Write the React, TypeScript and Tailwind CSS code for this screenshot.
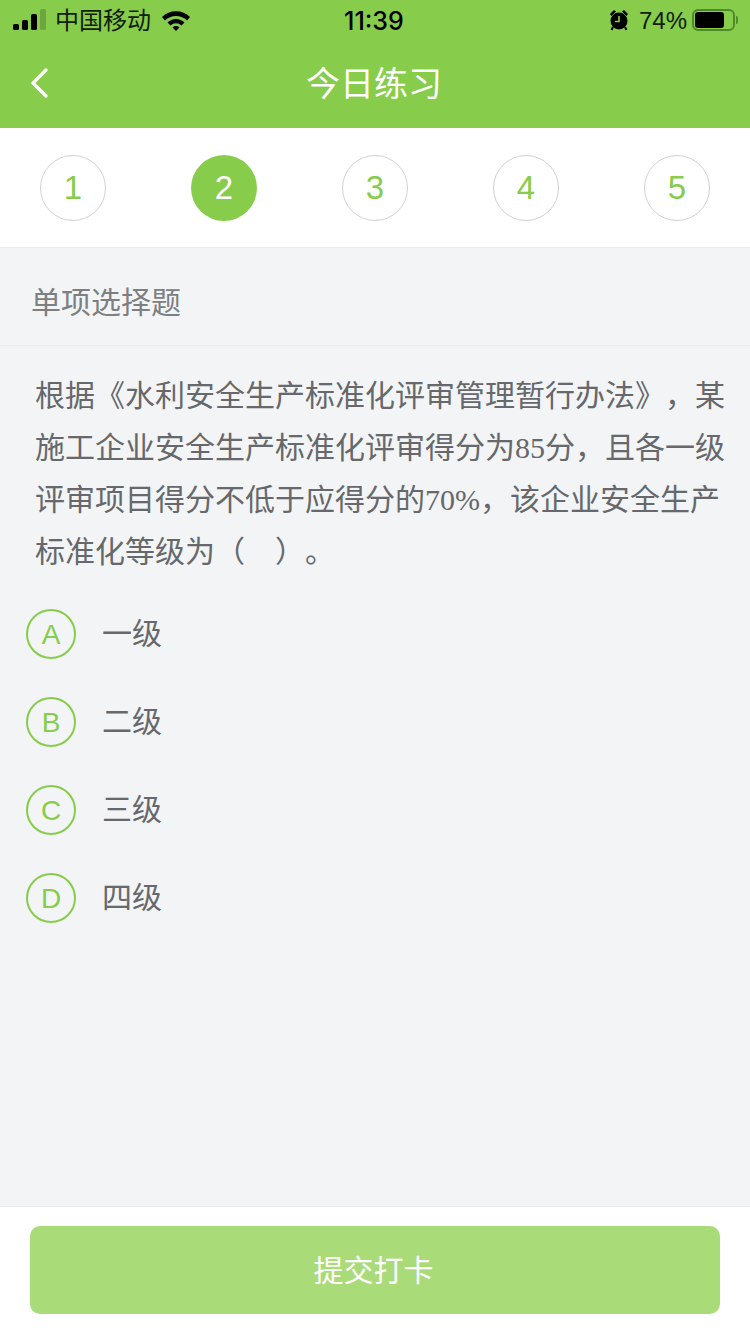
import React from 'react'

const cjk = "font-['Liberation_Sans','Noto_Sans_CJK_SC',sans-serif]"

const steps = [1, 2, 3, 4, 5]
const options = [
  { key: 'A', label: '一级' },
  { key: 'B', label: '二级' },
  { key: 'C', label: '三级' },
  { key: 'D', label: '四级' },
]

function StatusBar() {
  return (
    <div className="relative flex h-10 items-center justify-between pl-[13px] pr-[12px] pt-[2px] text-black">
      <div className="flex items-center">
        <div className="-mt-[3px] flex items-end gap-[3px]">
          <span className="h-[6px] w-[6px] rounded-[1.5px] bg-black" />
          <span className="h-[10px] w-[6px] rounded-[1.5px] bg-black" />
          <span className="h-[16px] w-[6px] rounded-[1.5px] bg-black" />
          <span className="h-[21px] w-[6px] rounded-[1.5px] bg-[#6ba63f]" />
        </div>
        <span className="ml-[9px] text-[24px] leading-[38px] text-[#10200a]">中国移动</span>
        <svg className="-mt-[2px] ml-[10px]" width="30" height="22" viewBox="0 0 30 22">
          <path d="M1 8 A20 20 0 0 1 29 8 L26 11.5 A15.5 15.5 0 0 0 4 11.5 Z" fill="#000" />
          <path d="M6.5 13.5 A12 12 0 0 1 23.5 13.5 L20.5 16.5 A8 8 0 0 0 9.5 16.5 Z" fill="#000" />
          <path d="M11.5 18.5 A5 5 0 0 1 18.5 18.5 L15 22 Z" fill="#000" />
        </svg>
      </div>
      <span className="absolute left-[344px] top-[1px] font-['Inter',sans-serif] text-[25px] font-medium leading-10">11:39</span>
      <div className="flex items-center">
        <svg className="-mt-[3px]" width="20" height="22" viewBox="0 0 20 22">
          <path d="M1 5 L5 1 L7 2.5 L2.5 7 Z M19 5 L15 1 L13 2.5 L17.5 7 Z" fill="#000" />
          <circle cx="10" cy="12" r="8.5" fill="#000" />
          <path d="M10 7 V12.5 H6" stroke="#87cc4b" strokeWidth="1.6" fill="none" />
          <path d="M4 18 L2.5 21 M16 18 L17.5 21" stroke="#000" strokeWidth="2" />
        </svg>
        <span className="ml-[10px] font-['Liberation_Sans',sans-serif] text-[24px] leading-[38px] text-[#10200a]">74%</span>
        <div className="-mt-[3px] ml-[5px] flex items-center">
          <div className="flex h-[22px] w-[43px] items-center rounded-[6px] border-2 border-[#4f8a2a] p-[1px]">
            <div className="h-[16px] w-[29px] rounded-[3px] bg-black" />
          </div>
          <div className="ml-[1px] h-[8px] w-[2px] rounded-r-sm bg-[#4f8a2a]" />
        </div>
      </div>
    </div>
  )
}

function NavBar() {
  return (
    <div className="relative flex h-[88px] items-center justify-center">
      <svg className="absolute left-[30px] top-[28px]" width="18" height="30" viewBox="0 0 18 30">
        <path d="M16 2 L3 15 L16 28" stroke="#fff" strokeWidth="3.2" fill="none" strokeLinecap="round" strokeLinejoin="round" />
      </svg>
      <span className="pr-[2px] text-[34px] leading-none text-white">今日练习</span>
    </div>
  )
}

export default function App() {
  return (
    <div className={`${cjk} flex h-[1334px] w-[750px] flex-col overflow-hidden bg-[#f2f4f6]`}>
      <div className="h-32 bg-[#87cc4b]">
        <StatusBar />
        <NavBar />
      </div>

      <div className="flex h-[120px] items-start justify-between border-b border-[#e9ebec] bg-white px-10 pt-[27px]">
        {steps.map((n) => (
          <div
            key={n}
            className={
              n === 2
                ? "flex h-[66px] w-[66px] items-center justify-center rounded-full bg-[#87cc4b] text-[33px] text-white"
                : "flex h-[66px] w-[66px] items-center justify-center rounded-full border border-[#cfd2d4] text-[33px] text-[#87cc4b]"
            }
          >
            {n}
          </div>
        ))}
      </div>

      <div className="flex h-[98px] items-center border-b border-[#e9ebec] pl-[31px] pt-[12px] text-[30px] text-[#7d7f81]">
        单项选择题
      </div>

      <div className="pl-[35px] pr-[25px] pt-6 font-['Liberation_Serif','Noto_Sans_CJK_SC',serif] text-[30px] leading-[52px] text-[#66686b] [text-spacing-trim:space-all]">
        <p>根据《水利安全生产标准化评审管理暂行办法》，某</p>
        <p>施工企业安全生产标准化评审得分为85分，且各一级</p>
        <p>评审项目得分不低于应得分的70%，该企业安全生产</p>
        <p>标准化等级为（　）。</p>
      </div>

      <div className="mt-[12px] flex flex-col">
        {options.map((o) => (
          <div key={o.key} className="flex h-[88px] items-center pl-[26px]">
            <div className="flex h-[50px] w-[50px] items-center justify-center rounded-full border-2 border-[#87cc4b] pt-[2px] text-[28px] text-[#87cc4b]">
              {o.key}
            </div>
            <span className="ml-[26px] -mt-[2px] text-[30px] text-[#66686b]">{o.label}</span>
          </div>
        ))}
      </div>

      <div className="mt-auto h-[128px] border-t border-[#e9ebec] bg-white px-[30px] pt-[19px]">
        <button className="flex h-[88px] w-[690px] items-center justify-center rounded-[10px] bg-[#a9dc79] pr-[3px] text-[30px] text-white">
          提交打卡
        </button>
      </div>
    </div>
  )
}
